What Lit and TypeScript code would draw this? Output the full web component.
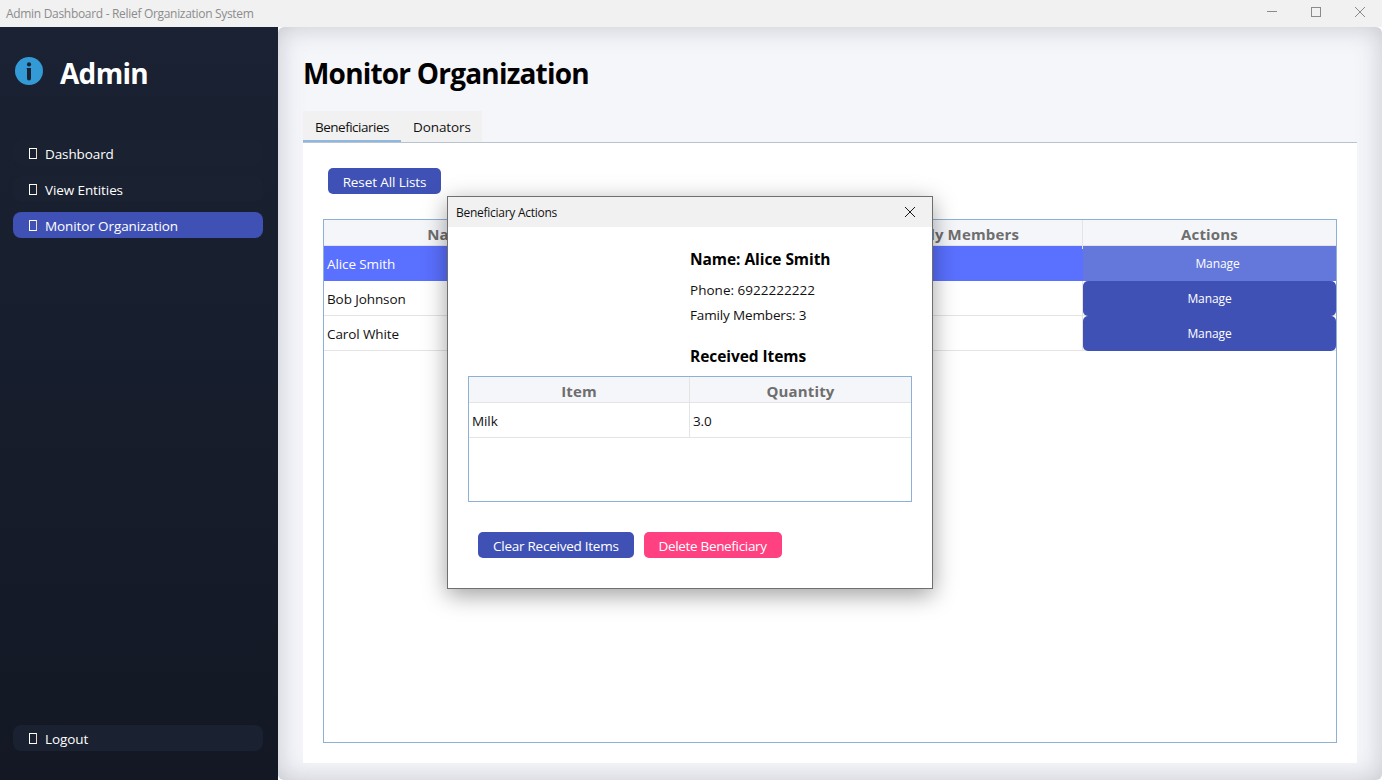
import { LitElement, html, css } from 'lit';
import { customElement, state } from 'lit/decorators.js';

interface Beneficiary {
	name: string;
	phone: string;
	members: number;
}

const BENEFICIARIES: Beneficiary[] = [
	{ name: 'Alice Smith', phone: '6922222222', members: 3 },
	{ name: 'Bob Johnson', phone: '6933333333', members: 2 },
	{ name: 'Carol White', phone: '6944444444', members: 4 },
];

@customElement('app-root')
export class AppRoot extends LitElement {
	@state() private selected = 0;

	private navItem(label: string, active = false) {
		return html`<div class="nav-item ${active ? 'active' : ''}"><span class="tofu"></span><span>${label}</span></div>`;
	}

	private windowBar() {
		return html`<header class="titlebar">
			<span class="titlebar-text">Admin Dashboard - Relief Organization System</span>
			<div class="controls">
				<svg width="12" height="12" viewBox="0 0 12 12"><path d="M1 5.5h10" stroke="#8a8a8a" fill="none" /></svg>
				<svg width="12" height="12" viewBox="0 0 12 12"><rect x="1.5" y="1.5" width="9" height="9" stroke="#8a8a8a" fill="none" /></svg>
				<svg width="12" height="12" viewBox="0 0 12 12"><path d="M1 1l10 10M11 1L1 11" stroke="#8a8a8a" fill="none" /></svg>
			</div>
		</header>`;
	}

	private sidebar() {
		return html`<aside class="sidebar">
			<div class="brand">
				<svg width="28" height="28" viewBox="0 0 28 28">
					<circle cx="14" cy="14" r="14" fill="#349ad5" />
					<circle cx="14" cy="7.4" r="2.1" fill="#1a2232" />
					<path d="M11.6 11h4.4v10.4a2 2 0 0 1-4 0v-9.2q-0.4-0.2-0.4-0.6z" fill="#1a2232" />
				</svg>
				<span class="brand-name">Admin</span>
			</div>
			<nav class="nav">
				${this.navItem('Dashboard')} ${this.navItem('View Entities')} ${this.navItem('Monitor Organization', true)}
			</nav>
			<div class="nav-bottom">${this.navItem('Logout')}</div>
		</aside>`;
	}

	private mainTable() {
		return html`<div class="grid main-grid">
			<div class="row head">
				<div class="th">Name</div>
				<div class="th">Phone</div>
				<div class="th">Family Members</div>
				<div class="th">Actions</div>
			</div>
			${BENEFICIARIES.map(
				(b, i) => html`<div class="row body-row ${i === this.selected ? 'selected' : ''}">
					<div class="td">${b.name}</div>
					<div class="td">${b.phone}</div>
					<div class="td">${b.members}</div>
					<div class="td action"><span>Manage</span></div>
				</div>`,
			)}
		</div>`;
	}

	private dialog() {
		const b = BENEFICIARIES[this.selected];
		return html`<section class="dialog">
			<div class="dialog-bar">
				<span>Beneficiary Actions</span>
				<svg width="12" height="12" viewBox="0 0 12 12"><path d="M1 1l10 10M11 1L1 11" stroke="#1a1a1a" fill="none" /></svg>
			</div>
			<div class="dialog-body">
				<div class="details">
					<h3>Name: ${b.name}</h3>
					<p class="phone">Phone: ${b.phone}</p>
					<p class="members">Family Members: ${b.members}</p>
					<h3 class="received">Received Items</h3>
				</div>
				<div class="grid items-grid">
					<div class="row head">
						<div class="th">Item</div>
						<div class="th">Quantity</div>
					</div>
					<div class="row body-row">
						<div class="td">Milk</div>
						<div class="td">3.0</div>
					</div>
				</div>
				<div class="dialog-actions">
					<button class="btn clear">Clear Received Items</button>
					<button class="btn danger">Delete Beneficiary</button>
				</div>
			</div>
		</section>`;
	}

	protected render() {
		return html`${this.windowBar()}
			<div class="app">
				${this.sidebar()}
				<main class="main">
					<h1>Monitor Organization</h1>
					<div class="tabs">
						<div class="tab active">Beneficiaries</div>
						<div class="tab">Donators</div>
					</div>
					<div class="panel">
						<button class="btn reset">Reset All Lists</button>
						${this.mainTable()}
					</div>
				</main>
			</div>
			${this.dialog()}`;
	}

	static styles = css`
		:host {
			display: block;
			position: relative;
			width: 1382px;
			height: 780px;
			overflow: hidden;
			font-family: 'Open Sans', 'Noto Sans', sans-serif;
			font-size: 13.5px;
			color: #111;
			background: #fff;
		}

		* {
			box-sizing: border-box;
			margin: 0;
			padding: 0;
		}

		.titlebar {
			height: 27px;
			background: #f1f1f1;
			display: flex;
			align-items: center;
			justify-content: space-between;
			padding: 0 16px 1px 6px;
		}

		.titlebar-text {
			font-size: 12px;
			letter-spacing: -0.31px;
			color: #8c8c8c;
		}

		.controls {
			display: flex;
			gap: 32px;
			margin-bottom: 2px;
		}

		.app {
			display: flex;
			height: 753px;
		}

		.sidebar {
			width: 278px;
			flex: none;
			display: flex;
			flex-direction: column;
			padding: 0 15px 29px 13px;
			background: linear-gradient(#1a2233, #131824);
			color: #fff;
		}

		.brand {
			display: flex;
			align-items: center;
			gap: 17px;
			height: 88px;
			padding-left: 2px;
		}

		.brand-name {
			font-size: 28px;
			font-weight: 700;
			letter-spacing: -0.7px;
			position: relative;
			top: 2px;
		}

		.nav {
			display: flex;
			flex-direction: column;
			gap: 10px;
			margin-top: 25px;
		}

		.nav-bottom {
			margin-top: auto;
		}

		.nav-item {
			height: 26px;
			display: flex;
			align-items: center;
			gap: 8px;
			padding: 1px 0 0 16px;
			border-radius: 8px;
			background: #1a2130;
			letter-spacing: -0.1px;
		}

		.nav-item.active {
			background: #3f51b5;
		}

		.tofu {
			width: 8px;
			height: 11px;
			border: 1px solid #fff;
			border-right-color: #f3d9c4;
		}

		.main {
			flex: 1;
			display: flex;
			flex-direction: column;
			padding: 24px 25px 17px;
			background: #f5f6fa;
			border-radius: 6px;
			box-shadow: inset 0 0 26px rgba(70, 75, 90, 0.28);
		}

		h1 {
			font-size: 28px;
			font-weight: 700;
			line-height: 44px;
			height: 60px;
			letter-spacing: -0.8px;
			color: #000;
		}

		.tabs {
			display: flex;
			align-self: flex-start;
			height: 32px;
			background: #f1f1f1;
		}

		.tab {
			padding: 7px 12px 0;
			width: 81px;
			letter-spacing: -0.1px;
			white-space: nowrap;
		}

		.tab.active {
			width: 98px;
			letter-spacing: -0.5px;
			border-bottom: 3px solid #8fb7e0;
		}

		.panel {
			flex: 1;
			display: flex;
			flex-direction: column;
			align-items: flex-start;
			background: #fff;
			border-top: 1px solid #b9c2cf;
			margin-top: -1px;
			padding: 25px 20px 20px;
		}

		.btn {
			height: 26px;
			border: none;
			border-radius: 5px;
			background: #3f51b5;
			color: #fff;
			font: inherit;
			letter-spacing: -0.1px;
			padding: 1px 15px 0;
		}

		.btn.clear {
			letter-spacing: -0.25px;
		}

		.btn.danger {
			background: #ff4081;
			letter-spacing: -0.33px;
		}

		.btn.reset {
			margin-left: 5px;
			margin-bottom: 25px;
			width: 113px;
			padding: 1px 0 0;
		}

		.grid {
			border: 1px solid #8fb0d6;
			background: #fff;
			width: 100%;
		}

		.main-grid {
			flex: 1;
		}

		.row {
			display: grid;
			grid-template-columns: repeat(4, 1fr);
		}

		.items-grid .row {
			grid-template-columns: 221px 1fr;
		}

		.head {
			height: 26px;
			background: #f5f6fa;
			border-bottom: 1px solid #e4e4e4;
		}

		.th {
			text-align: center;
			font-size: 15px;
			font-weight: 700;
			line-height: 29px;
			color: #6e6e6e;
			border-right: 1px solid #e4e4e4;
			letter-spacing: 0.15px;
		}

		.th:last-child,
		.td:last-child {
			border-right: none;
		}

		.body-row {
			height: 35px;
			grid-template-rows: 34px;
			border-bottom: 1px solid #e4e4e4;
		}

		.td {
			height: 34px;
			padding-left: 3px;
			line-height: 37px;
			border-right: 1px solid #e4e4e4;
			letter-spacing: -0.1px;
		}

		.selected {
			background: #5a70ff;
			color: #fff;
			border-bottom: none;
		}

		.td.action {
			height: 35px;
			padding: 0;
			line-height: 35px;
			background: #3f51b5;
			color: #fff;
			font-size: 12px;
			text-align: center;
			border-radius: 5px;
		}

		.selected .td {
			border-right: none;
		}

		.selected .td.action {
			background: #6478dc;
			border-radius: 0;
			padding-left: 16px;
		}

		.dialog {
			position: absolute;
			left: 447px;
			top: 196px;
			width: 486px;
			height: 393px;
			background: #fff;
			border: 1px solid #6f6f6f;
			box-shadow: 0 6px 22px rgba(0, 0, 0, 0.38);
		}

		.dialog-bar {
			height: 30px;
			display: flex;
			align-items: center;
			justify-content: space-between;
			padding: 0 16px 0 8px;
			background: #f1f1f1;
			font-size: 12px;
			letter-spacing: -0.27px;
			color: #111;
		}

		.dialog-body {
			padding: 0 20px;
		}

		.details {
			padding: 22px 0 0 222px;
			height: 149px;
		}

		h3 {
			font-size: 15.5px;
			font-weight: 700;
			letter-spacing: -0.06px;
			color: #000;
			line-height: 20px;
		}

		.phone {
			margin-top: 11px;
			line-height: 20px;
			letter-spacing: 0.02px;
		}

		.members {
			margin-top: 5px;
			line-height: 20px;
			letter-spacing: -0.15px;
		}

		.received {
			margin-top: 21px;
		}

		.items-grid {
			height: 126px;
		}

		.dialog-actions {
			display: flex;
			gap: 10px;
			margin-top: 30px;
			padding-left: 10px;
		}
	`;
}
